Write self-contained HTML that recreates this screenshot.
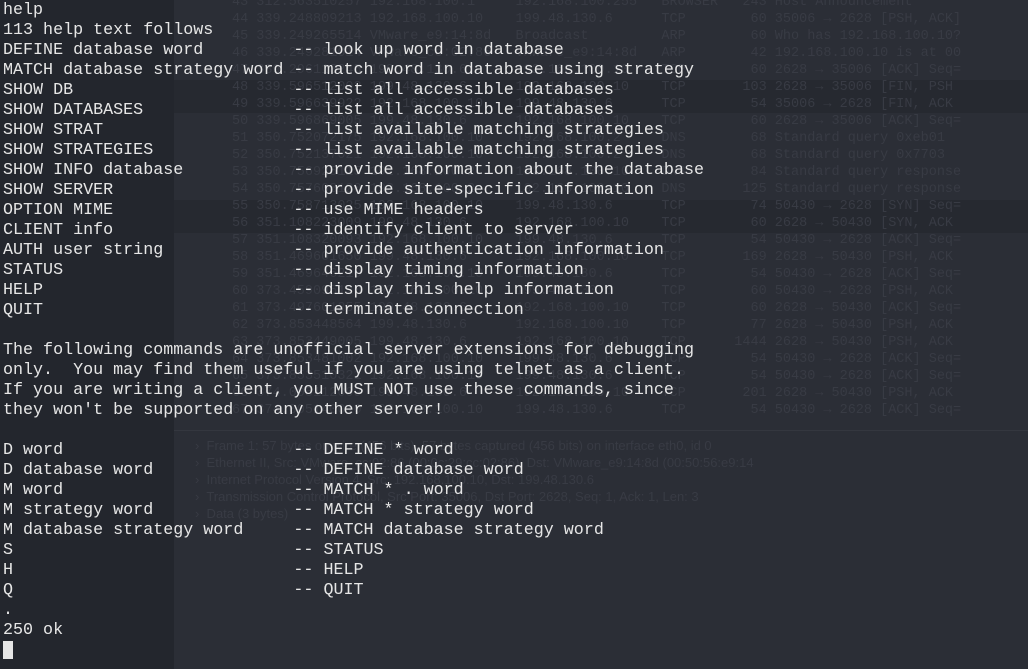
<!DOCTYPE html>
<html><head><meta charset="utf-8"><style>
html,body{margin:0;padding:0;width:1028px;height:669px;overflow:hidden;background:#2b2e36}
.left{position:absolute;left:0;top:0;width:174px;height:669px;background:#23262d}
.hl{position:absolute;left:174px;width:854px;height:33px;background:#262930}
.ws{position:absolute;font-family:"Liberation Mono",monospace;font-size:13.5px;line-height:17px;color:#383b44;white-space:pre;left:232px;top:-6px}
.ws2{position:absolute;font-family:"Liberation Sans",sans-serif;font-size:13px;line-height:17px;color:#383b44;white-space:pre;left:195px;top:437px}
.sep{position:absolute;left:174px;top:430px;width:854px;height:1px;background:#34373f}
pre{position:absolute;left:3px;top:1px;margin:0;font-family:"Liberation Mono",monospace;font-size:16.7px;line-height:20px;color:#e6e6e6;white-space:pre}
.cur{position:absolute;left:3px;top:641px;width:10px;height:18px;background:#e6e6e6}
</style></head><body>
<div class="left"></div>
<div class="hl" style="top:80px"></div>
<div class="hl" style="top:200px"></div>
<div class="ws">43 312.563510257 192.168.100.1     192.168.100.255   BROWSER   243 Host Announcement
44 339.248809213 192.168.100.10    199.48.130.6      TCP        60 35006 → 2628 [PSH, ACK]
45 339.249265514 VMware_e9:14:8d   Broadcast         ARP        60 Who has 192.168.100.10?
46 339.249281014 VMware_cc:02:86   VMware_e9:14:8d   ARP        42 192.168.100.10 is at 00
47 339.296113245 199.48.130.6      192.168.100.10    TCP        60 2628 → 35006 [ACK] Seq=
48 339.596512002 199.48.130.6      192.168.100.10    TCP       103 2628 → 35006 [FIN, PSH
49 339.596639922 192.168.100.10    199.48.130.6      TCP        54 35006 → 2628 [FIN, ACK
50 339.596869005 199.48.130.6      192.168.100.10    TCP        60 2628 → 35006 [ACK] Seq=
51 350.752072175 192.168.100.10    192.168.100.2     DNS        68 Standard query 0xeb01
52 350.752137021 192.168.100.10    192.168.100.2     DNS        68 Standard query 0x7703
53 350.756925115 192.168.100.2     192.168.100.10    DNS        84 Standard query response
54 350.757608120 192.168.100.2     192.168.100.10    DNS       125 Standard query response
55 350.758713025 192.168.100.10    199.48.130.6      TCP        74 50430 → 2628 [SYN] Seq=
56 351.108223009 199.48.130.6      192.168.100.10    TCP        60 2628 → 50430 [SYN, ACK
57 351.108320093 192.168.100.10    199.48.130.6      TCP        54 50430 → 2628 [ACK] Seq=
58 351.469601650 199.48.130.6      192.168.100.10    TCP       169 2628 → 50430 [PSH, ACK
59 351.469646210 192.168.100.10    199.48.130.6      TCP        54 50430 → 2628 [ACK] Seq=
60 373.459095120 192.168.100.10    199.48.130.6      TCP        60 50430 → 2628 [PSH, ACK
61 373.497601255 199.48.130.6      192.168.100.10    TCP        60 2628 → 50430 [ACK] Seq=
62 373.853448564 199.48.130.6      192.168.100.10    TCP        77 2628 → 50430 [PSH, ACK
63 373.853449005 199.48.130.6      192.168.100.10    TCP      1444 2628 → 50430 [PSH, ACK
64 373.853481002 192.168.100.10    199.48.130.6      TCP        54 50430 → 2628 [ACK] Seq=
65 373.853510321 192.168.100.10    199.48.130.6      TCP        54 50430 → 2628 [ACK] Seq=
66 374.005112009 199.48.130.6      192.168.100.10    TCP       201 2628 → 50430 [PSH, ACK
67 374.005140010 192.168.100.10    199.48.130.6      TCP        54 50430 → 2628 [ACK] Seq=</div>
<div class="sep"></div>
<div class="ws2">›  Frame 1: 57 bytes on wire (456 bits), 57 bytes captured (456 bits) on interface eth0, id 0
›  Ethernet II, Src: VMware_cc:02:86 (00:0c:29:cc:02:86), Dst: VMware_e9:14:8d (00:50:56:e9:14
›  Internet Protocol Version 4, Src: 192.168.100.10, Dst: 199.48.130.6
›  Transmission Control Protocol, Src Port: 35006, Dst Port: 2628, Seq: 1, Ack: 1, Len: 3
›  Data (3 bytes)</div>
<pre>help
113 help text follows
DEFINE database word         -- look up word in database
MATCH database strategy word -- match word in database using strategy
SHOW DB                      -- list all accessible databases
SHOW DATABASES               -- list all accessible databases
SHOW STRAT                   -- list available matching strategies
SHOW STRATEGIES              -- list available matching strategies
SHOW INFO database           -- provide information about the database
SHOW SERVER                  -- provide site-specific information
OPTION MIME                  -- use MIME headers
CLIENT info                  -- identify client to server
AUTH user string             -- provide authentication information
STATUS                       -- display timing information
HELP                         -- display this help information
QUIT                         -- terminate connection

The following commands are unofficial server extensions for debugging
only.  You may find them useful if you are using telnet as a client.
If you are writing a client, you MUST NOT use these commands, since
they won't be supported on any other server!

D word                       -- DEFINE * word
D database word              -- DEFINE database word
M word                       -- MATCH * . word
M strategy word              -- MATCH * strategy word
M database strategy word     -- MATCH database strategy word
S                            -- STATUS
H                            -- HELP
Q                            -- QUIT
.
250 ok</pre>
<div class="cur"></div>
</body></html>
